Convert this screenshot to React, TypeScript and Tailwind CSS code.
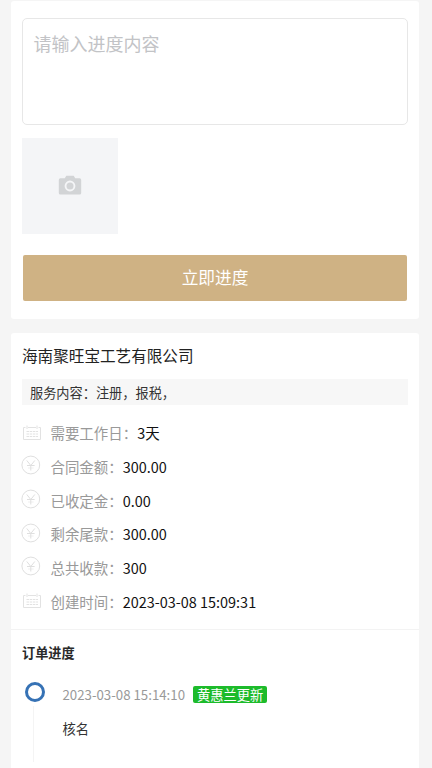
type IconName = "calendar" | "yen";

type Detail = {
  icon: IconName;
  label: string;
  value: string;
};

const details: Detail[] = [
  { icon: "calendar", label: "需要工作日：", value: "3天" },
  { icon: "yen", label: "合同金额：", value: "300.00" },
  { icon: "yen", label: "已收定金：", value: "0.00" },
  { icon: "yen", label: "剩余尾款：", value: "300.00" },
  { icon: "yen", label: "总共收款：", value: "300" },
  { icon: "calendar", label: "创建时间：", value: "2023-03-08 15:09:31" },
];

function CameraIcon() {
  return (
    <svg className="mb-0.5 h-5 w-6" viewBox="0 0 24 20" fill="#d2d4d6">
      <path
        fillRule="evenodd"
        d="M8.3.7h7.4l1.5 2.6h4.4A1.6 1.6 0 0 1 23.2 4.9v13a1.6 1.6 0 0 1-1.6 1.6H2.4A1.6 1.6 0 0 1 .8 17.9v-13a1.6 1.6 0 0 1 1.6-1.6h4.4zM12 5.6a5.4 5.4 0 1 0 0 10.8 5.4 5.4 0 0 0 0-10.8z"
      />
      <circle cx="12" cy="11" r="3.5" />
    </svg>
  );
}

function CalendarIcon() {
  return (
    <svg className="h-5 w-5" viewBox="0 0 20 20" fill="none" stroke="#e2e2e2">
      <path d="M6 4.5h8M3.5 4.500h-2v12h17v-12h-2M5 2.500v3.500M15 2.500v3.500" />
      <path d="M4.500 8.500h11.500M4.500 11h11.500M4.500 13.500h11.500" strokeDasharray="2.500 0.700" />
    </svg>
  );
}

function YenIcon() {
  return (
    <svg className="-mt-[3px] -ml-px mr-px h-5 w-5" viewBox="0 0 20 20" fill="none" stroke="#dfdfdf">
      <circle cx="9.8" cy="10" r="8.9" />
      <path d="M5.800 5.500l4 5L13.800 5.500M9.800 10.500v5M6 10.500h7.600" />
      <path d="M7 13h5.600" opacity="0.5" />
    </svg>
  );
}

function ProgressForm() {
  return (
    <section className="h-[318px] rounded-[3px] bg-white px-[11px] pt-[17px]">
      <textarea
        className="block h-[107px] w-full resize-none rounded-[5px] border border-[#e7e7e7] px-[10.5px] pt-[11px] text-[18px] leading-[27px] outline-none placeholder:text-[#c2c3c6]"
        placeholder="请输入进度内容"
      />
      <button className="mt-[12.5px] flex size-24 items-center justify-center bg-[#f4f5f7]" type="button">
        <CameraIcon />
      </button>
      <button
        className="mx-px mt-[21px] flex h-[46px] w-[384px] items-center justify-center rounded-[2px] bg-[#cfb284] text-[16.7px] text-white"
        type="button"
      >
        立即进度
      </button>
    </section>
  );
}

function DetailRow({ icon, label, value }: Detail) {
  return (
    <li className="flex h-[33.7px] items-center text-[14.45px]">
      {icon === "calendar" ? <CalendarIcon /> : <YenIcon />}
      <span className="ml-[8.5px] text-[#999]">{label}</span>
      <span className="text-[#111]">{value}</span>
    </li>
  );
}

function Timeline() {
  return (
    <div className="flex pl-[3px] pt-[20px]">
      <div className="-mt-px flex w-5 flex-col items-center">
        <span className="size-5 shrink-0 rounded-full border-3 border-[#3672b5]" />
        <span className="mt-1 mr-1 h-14 w-px bg-[#f4f4f4]" />
      </div>
      <div className="ml-[17.5px] text-[13.25px]">
        <div className="flex h-[23px] items-center">
          <span className="pt-px text-[#999]">2023-03-08 15:14:10</span>
          <span className="ml-2 flex h-[17px] items-center rounded-[2px] bg-[#1dbb2b] px-1 text-white">
            黄惠兰更新
          </span>
        </div>
        <p className="mt-[13px] leading-[20px] text-[#333]">核名</p>
      </div>
    </div>
  );
}

function OrderCard() {
  return (
    <section className="mt-[14px] h-[435px] rounded-t-[3px] bg-white">
      <div className="px-[11px] pt-[10px]">
        <h1 className="text-[15.6px] leading-6 text-[#222]">海南聚旺宝工艺有限公司</h1>
        <p className="mt-[12px] h-[26px] bg-[#f7f7f7] pl-2 text-[13.2px] leading-[27px] text-[#333]">
          服务内容：注册，报税，
        </p>
        <ul className="mt-[11.2px]">
          {details.map((detail) => (
            <DetailRow key={detail.label} {...detail} />
          ))}
        </ul>
      </div>
      <div className="mt-[10.8px] border-t border-[#f3f3f3] px-[11px] pt-[13px]">
        <h2 className="text-[13.2px] font-bold leading-5 text-[#2a2a2a]">订单进度</h2>
        <Timeline />
      </div>
    </section>
  );
}

export default function App() {
  return (
    <main className="h-screen overflow-hidden bg-[#f5f5f5] pl-[11px] pr-[13px] pt-px font-['Noto_Sans_CJK_SC',sans-serif]">
      <ProgressForm />
      <OrderCard />
    </main>
  );
}
